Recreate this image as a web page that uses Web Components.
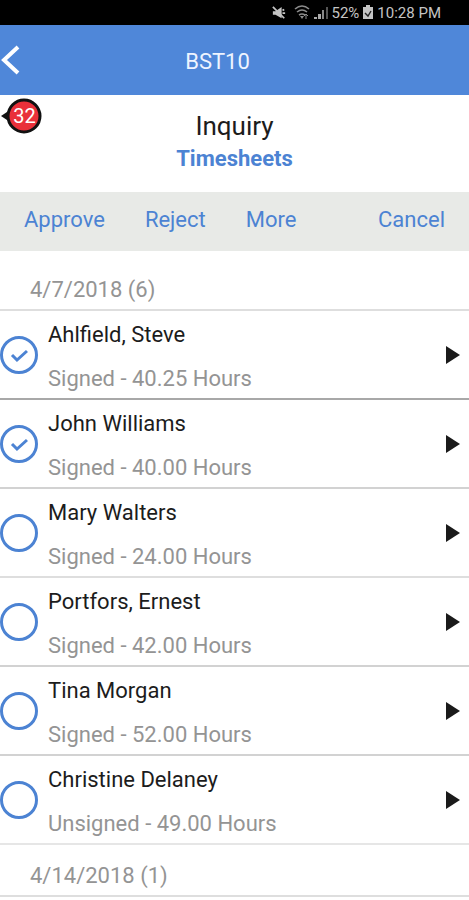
<!DOCTYPE html>
<html lang="en">
<head>
<meta charset="utf-8">
<meta name="viewport" content="width=device-width, initial-scale=1">
<title>BST10 Timesheets</title>
<style>
  body {
    --accent: #4c83d3;
    --bar: #4f87d9;
    --muted: #949494;
    margin: 0;
    background: #fff;
    color: #1c1c1c;
    font-family: Roboto, "Liberation Sans", sans-serif;
    font-size: 22px;
    line-height: 28px;
  }
</style>
</head>
<body>
<timesheet-app></timesheet-app>

<script>
function makeTemplate(html) {
  const template = document.createElement('template');
  template.innerHTML = html;
  return template;
}

class BaseElement extends HTMLElement {
  constructor() {
    super();
    this.attachShadow({mode: 'open'});
    this.shadowRoot.appendChild(this.constructor.template.content.cloneNode(true));
  }
}

class StatusBar extends BaseElement {}
StatusBar.template = makeTemplate(`
  <style>
    :host {
      display: flex;
      align-items: center;
      justify-content: flex-end;
      gap: 4px;
      height: 25px;
      padding-right: 28px;
      background: #000;
      color: #c4c4c4;
      font-size: 15px;
      line-height: 24px;
    }
    svg { display: block; }
    .mute { margin-right: 4px; }
  </style>
  <svg class="mute" width="14" height="16" viewBox="0 0 16 16">
    <path d="M1 6h3l7-5v13l-7-4H1z" fill="#c4c4c4"/>
    <path d="M1 1l13 13M12 5l2-1M12 8h3" stroke="#c4c4c4" stroke-width="2"/>
  </svg>
  <svg width="16" height="15" viewBox="0 0 16 15" fill="none" stroke="#8c8c8c" stroke-width="1.6">
    <path d="M1 4q7-6 14 0M3 7q5-4 10 0M5 10q3-2 6 0"/>
    <path d="M8 14l-2-3h4z" fill="#8c8c8c" stroke="none"/>
    <path d="M12 14V9m-2 2l2-2 2 2" stroke-width="1"/>
  </svg>
  <svg width="14" height="14" viewBox="0 0 14 14">
    <path d="M0 11h3v2H0zM4 8h3v5H4z" fill="#aaa"/>
    <path d="M8 4h2v9H8z" fill="#888"/>
    <path d="M12 1h2v12h-2z" fill="#555"/>
  </svg>
  <span>52%</span>
  <svg width="10" height="15" viewBox="0 0 10 15">
    <path d="M3 0h4v2h3v12H0V2h3z" fill="#c4c4c4"/>
    <path d="M2 8l3 3 3-5" fill="none" stroke="#222" stroke-width="1.4"/>
  </svg>
  <span>10:28 PM</span>
`);
customElements.define('status-bar', StatusBar);

class NavBar extends BaseElement {}
NavBar.template = makeTemplate(`
  <style>
    :host {
      display: grid;
      grid-template-columns: 20px 1fr 54px;
      align-items: center;
      height: 70px;
      background: var(--bar);
      color: #eef4ff;
    }
    button {
      padding: 0;
      border: 0;
      background: none;
      color: #fff;
    }
    svg { display: block; }
    h1 {
      margin: 0;
      padding-top: 4px;
      font-size: inherit;
      font-weight: 400;
      text-align: center;
    }
  </style>
  <button aria-label="Back">
    <svg width="20" height="32" viewBox="0 0 20 32">
      <path d="M18 3L4 16l14 13" fill="none" stroke="currentColor" stroke-width="4"/>
    </svg>
  </button>
  <h1><slot></slot></h1>
`);
customElements.define('nav-bar', NavBar);

class PageHeading extends BaseElement {}
PageHeading.template = makeTemplate(`
  <style>
    :host {
      display: block;
      position: relative;
      padding: 15px 0 19px;
      text-align: center;
    }
    h2 {
      margin: 0;
      padding-bottom: 3px;
      font-size: 26px;
      font-weight: 400;
      line-height: 32px;
    }
    p {
      margin: 0;
      color: var(--accent);
      font-weight: 700;
    }
    /* notification bubble, pinned to the left edge */
    .badge {
      position: absolute;
      top: 3px;
      left: 0;
      width: 42px;
      height: 36px;
    }
    .badge svg {
      position: absolute;
      inset: 0;
    }
    .badge span {
      position: relative;
      display: block;
      padding-left: 7px;
      color: #fff;
      font-size: 20px;
      line-height: 36px;
    }
  </style>
  <div class="badge">
    <svg width="42" height="36" viewBox="0 0 42 36">
      <path d="M1 18l9-6v12z" fill="#111"/>
      <circle cx="24" cy="18" r="16" fill="#e9303a" stroke="#111" stroke-width="3"/>
    </svg>
    <span><slot name="count"></slot></span>
  </div>
  <h2><slot name="title"></slot></h2>
  <p><slot name="subtitle"></slot></p>
`);
customElements.define('page-heading', PageHeading);

class ActionBar extends BaseElement {}
ActionBar.template = makeTemplate(`
  <style>
    :host {
      display: flex;
      gap: 40px;
      height: 59px;
      box-sizing: border-box;
      padding: 14px 24px 17px;
      background: #e8eae7;
    }
    button {
      padding: 0;
      border: 0;
      background: none;
      color: var(--accent);
      font: inherit;
    }
    .cancel { margin-left: auto; }
  </style>
  <button>Approve</button>
  <button>Reject</button>
  <button>More</button>
  <button class="cancel">Cancel</button>
`);
customElements.define('action-bar', ActionBar);

class TimesheetGroup extends BaseElement {}
TimesheetGroup.template = makeTemplate(`
  <style>
    :host { display: block; }
    h3 {
      margin: 0;
      padding: 17px 30px 5px;
      border-bottom: 2px solid #dedede;
      color: var(--muted);
      font-size: inherit;
      font-weight: 400;
    }
  </style>
  <h3><slot name="date"></slot></h3>
  <slot></slot>
`);
customElements.define('timesheet-group', TimesheetGroup);

class TimesheetRow extends BaseElement {
  connectedCallback() {
    this.shadowRoot.querySelector('input').checked = this.hasAttribute('checked');
  }
}
TimesheetRow.template = makeTemplate(`
  <style>
    :host {
      display: grid;
      grid-template-columns: 38px 1fr 14px;
      align-items: center;
      column-gap: 10px;
      height: 89px;
      box-sizing: border-box;
      padding-right: 9px;
      border-bottom: 2px solid var(--line, #d2d2d2);
    }
    label {
      display: contents;
    }
    .check {
      display: grid;
    }
    .check > * {
      grid-area: 1 / 1;
    }
    input {
      appearance: none;
      width: 38px;
      height: 38px;
      margin: 0;
      border: 3px solid var(--accent);
      border-radius: 50%;
    }
    .check svg {
      visibility: hidden;
      pointer-events: none;
    }
    input:checked + svg {
      visibility: visible;
    }
    .text {
      display: grid;
      row-gap: 16px;
      padding-top: 4px;
    }
    .status { color: var(--muted); }
    button {
      padding: 0;
      border: 0;
      background: none;
    }
    button svg { display: block; }
  </style>
  <label>
    <span class="check">
      <input type="checkbox">
      <svg width="38" height="38" viewBox="0 0 38 38">
        <path d="M12 19l5 5 10-9" fill="none" stroke="var(--accent)" stroke-width="3"/>
      </svg>
    </span>
    <span class="text">
      <span><slot name="name"></slot></span>
      <span class="status"><slot></slot></span>
    </span>
  </label>
  <button aria-label="Open">
    <svg width="14" height="18" viewBox="0 0 14 18"><path d="M0 0l14 9-14 9z" fill="#1a1a1a"/></svg>
  </button>
`);
customElements.define('timesheet-row', TimesheetRow);

class TimesheetApp extends BaseElement {}
TimesheetApp.template = makeTemplate(`
  <style>
    :host { display: block; }
    main { padding-top: 8px; }
    timesheet-row:first-of-type { --line: #a8a8a8; }
    timesheet-row:nth-of-type(3) { --line: #dedede; }
    timesheet-row:last-of-type { --line: #e6e6e6; }
  </style>
  <status-bar></status-bar>
  <nav-bar>BST10</nav-bar>
  <page-heading>
    <span slot="count">32</span>
    <span slot="title">Inquiry</span>
    <span slot="subtitle">Timesheets</span>
  </page-heading>
  <action-bar></action-bar>
  <main>
    <timesheet-group>
      <span slot="date">4/7/2018 (6)</span>
      <timesheet-row checked><span slot="name">Ahlfield, Steve</span>Signed - 40.25 Hours</timesheet-row>
      <timesheet-row checked><span slot="name">John Williams</span>Signed - 40.00 Hours</timesheet-row>
      <timesheet-row><span slot="name">Mary Walters</span>Signed - 24.00 Hours</timesheet-row>
      <timesheet-row><span slot="name">Portfors, Ernest</span>Signed - 42.00 Hours</timesheet-row>
      <timesheet-row><span slot="name">Tina Morgan</span>Signed - 52.00 Hours</timesheet-row>
      <timesheet-row><span slot="name">Christine Delaney</span>Unsigned - 49.00 Hours</timesheet-row>
    </timesheet-group>
    <timesheet-group>
      <span slot="date">4/14/2018 (1)</span>
    </timesheet-group>
  </main>
`);
customElements.define('timesheet-app', TimesheetApp);
</script>
</body>
</html>
